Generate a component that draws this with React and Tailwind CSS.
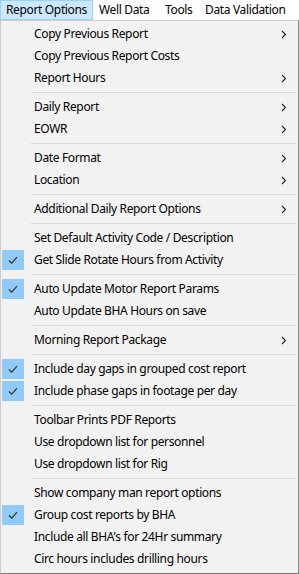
const menus = [
	{ label: "Report Options", w: "w-[93px]", active: true },
	{ label: "Well Data", w: "w-[66px]" },
	{ label: "Tools", w: "w-[40px]" },
	{ label: "Data Validation", w: "w-[100px]" },
];

// null = separator
const items = [
	{ label: "Copy Previous Report", sub: true },
	{ label: "Copy Previous Report Costs" },
	{ label: "Report Hours", sub: true },
	null,
	{ label: "Daily Report", sub: true },
	{ label: "EOWR", sub: true },
	null,
	{ label: "Date Format", sub: true },
	{ label: "Location", sub: true },
	null,
	{ label: "Additional Daily Report Options", sub: true },
	null,
	{ label: "Set Default Activity Code / Description" },
	{ label: "Get Slide Rotate Hours from Activity", checked: true },
	null,
	{ label: "Auto Update Motor Report Params", checked: true },
	{ label: "Auto Update BHA Hours on save" },
	null,
	{ label: "Morning Report Package", sub: true },
	null,
	{ label: "Include day gaps in grouped cost report", checked: true },
	{ label: "Include phase gaps in footage per day", checked: true },
	null,
	{ label: "Toolbar Prints PDF Reports" },
	{ label: "Use dropdown list for personnel" },
	{ label: "Use dropdown list for Rig" },
	null,
	{ label: "Show company man report options" },
	{ label: "Group cost reports by BHA", checked: true },
	{ label: "Include all BHA's for 24Hr summary" },
	{ label: "Circ hours includes drilling hours" },
];

function Check() {
	return (
		<svg width="12" height="12" viewBox="0 0 12 12" fill="none">
			<path d="M2 6.5 L4.8 9.2 L10 3.2" stroke="#333" strokeWidth="1.2" />
		</svg>
	);
}

function Chevron() {
	return (
		<svg width="6" height="9" viewBox="0 0 6 9" fill="none">
			<path d="M1 1 L4.5 4.5 L1 8" stroke="#222" strokeWidth="1.1" />
		</svg>
	);
}

export default function App() {
	return (
		<div
			className="w-[299px] h-[574px] bg-white text-[12px] text-black overflow-hidden tracking-[-0.35px]"
			style={{ fontFamily: '"Noto Sans", "Open Sans", sans-serif' }}
		>
			<div className="flex h-[20px] items-stretch whitespace-nowrap">
				{menus.map((m) => (
					<div
						key={m.label}
						className={`flex items-center leading-none shrink-0 ${m.w} ${
							m.active
								? "bg-[#cce8ff] border border-[#99d1ff] pl-[5px]"
								: "pl-[6px]"
						}`}
					>
						{m.label}
					</div>
				))}
			</div>
			<div className="w-[299px] h-[554px] border border-[#cccccc] border-r-[#8a8a8a] border-b-[#7a7a7a] bg-[#f2f2f2] pt-[2px] pl-[1px] pr-[2px]">
				{items.map((it, i) =>
					it === null ? (
						<div key={i} className="h-[7px] flex items-center pl-[29px]">
							<div className="h-px w-full bg-[#d7d7d7]" />
						</div>
					) : (
						<div key={i} className="h-[22px] flex items-center">
							<div className="w-[22px] h-[20px] flex items-center justify-center">
								{it.checked && (
									<div className="w-[22px] h-[20px] bg-[#91c9f7] flex items-center justify-center">
										<Check />
									</div>
								)}
							</div>
							<div className="flex-1 pl-[10px] whitespace-nowrap">{it.label}</div>
							{it.sub && (
								<div className="w-[20px] flex justify-center pr-[4px]">
									<Chevron />
								</div>
							)}
						</div>
					)
				)}
			</div>
		</div>
	);
}
